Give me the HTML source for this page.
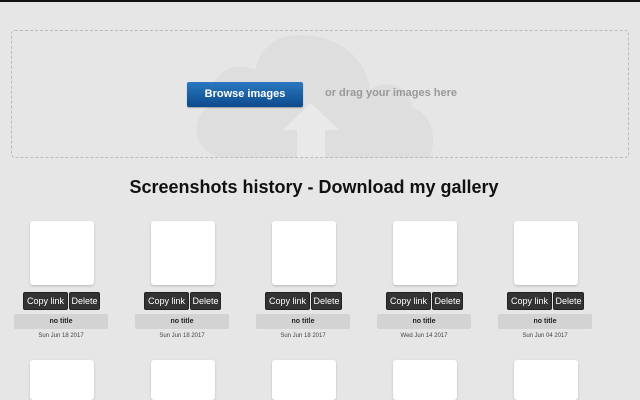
<!DOCTYPE html>
<html style="overflow:hidden;height:400px"><head><style>
body{margin:0;width:640px;height:400px;overflow:hidden;background:#e6e6e6;font-family:"Liberation Sans",sans-serif;position:relative}
.top{position:absolute;left:0;top:0;width:640px;height:2px;background:#111}
.drop{position:absolute;left:11px;top:30px;width:616px;height:126px;border:1px dashed #bbb;border-radius:4px}
.btn{position:absolute;left:187px;top:82px;width:116px;height:25px;background:linear-gradient(#2a78c0,#0d4a8c);border-radius:2px;color:#fff;font-weight:bold;font-size:11px;line-height:25px;text-align:center;box-shadow:0 1px 1px rgba(0,0,0,.3)}
.drag{position:absolute;left:325px;top:87px;color:#999;font-weight:bold;font-size:11px}
h1{position:absolute;top:177px;left:0;width:628px;margin:0;text-align:center;font-size:18px;color:#111}
.th{position:absolute;width:64px;height:64px;background:#fff;border-radius:3px;box-shadow:0 1px 2px rgba(0,0,0,.2)}
.b{position:absolute;top:292px;height:16px;background:#333;border:1px solid #222;border-radius:2px;color:#fff;font-size:9px;line-height:16px;text-align:center}
.nt{position:absolute;top:314px;height:15px;background:#d3d3d3;border-radius:2px;font-size:7px;font-weight:bold;line-height:15px;text-align:center;color:#222}
.dt{position:absolute;top:333px;font-size:6px;color:#444;text-align:center}
</style></head><body>
<div class="top"></div>
<svg style="position:absolute;left:0;top:0" width="640" height="160"><path d="M230 158 C190 158 188 115 212 105 C205 80 228 58 255 70 C260 48 275 35 300 35 C345 35 368 65 370 90 C385 78 410 85 412 108 C430 112 438 135 430 158 Z" fill="#dedede"/><path d="M283 130 L311 103 L339 130 L325 130 L325 158 L297 158 L297 130 Z" fill="#e9e9e9"/></svg>
<div class="drop"></div>
<div class="btn">Browse images</div>
<div class="drag">or drag your images here</div>
<h1>Screenshots history - Download my gallery</h1>
<div id="g"></div>
<script>
var d=["Sun Jun 18 2017","Sun Jun 18 2017","Sun Jun 18 2017","Wed Jun 14 2017","Sun Jun 04 2017"],h="";
for(var i=0;i<5;i++){var x=14+i*121;
h+='<div class="th" style="left:'+(x+16)+'px;top:221px"></div><div class="th" style="left:'+(x+16)+'px;top:360px;height:40px"></div>'+
'<div class="b" style="left:'+(x+9)+'px;width:43px">Copy link</div><div class="b" style="left:'+(x+55)+'px;width:29px">Delete</div>'+
'<div class="nt" style="left:'+x+'px;width:94px">no title</div><div class="dt" style="left:'+x+'px;width:94px">'+d[i]+'</div>';}
document.getElementById("g").innerHTML=h;
</script>
</body></html>
